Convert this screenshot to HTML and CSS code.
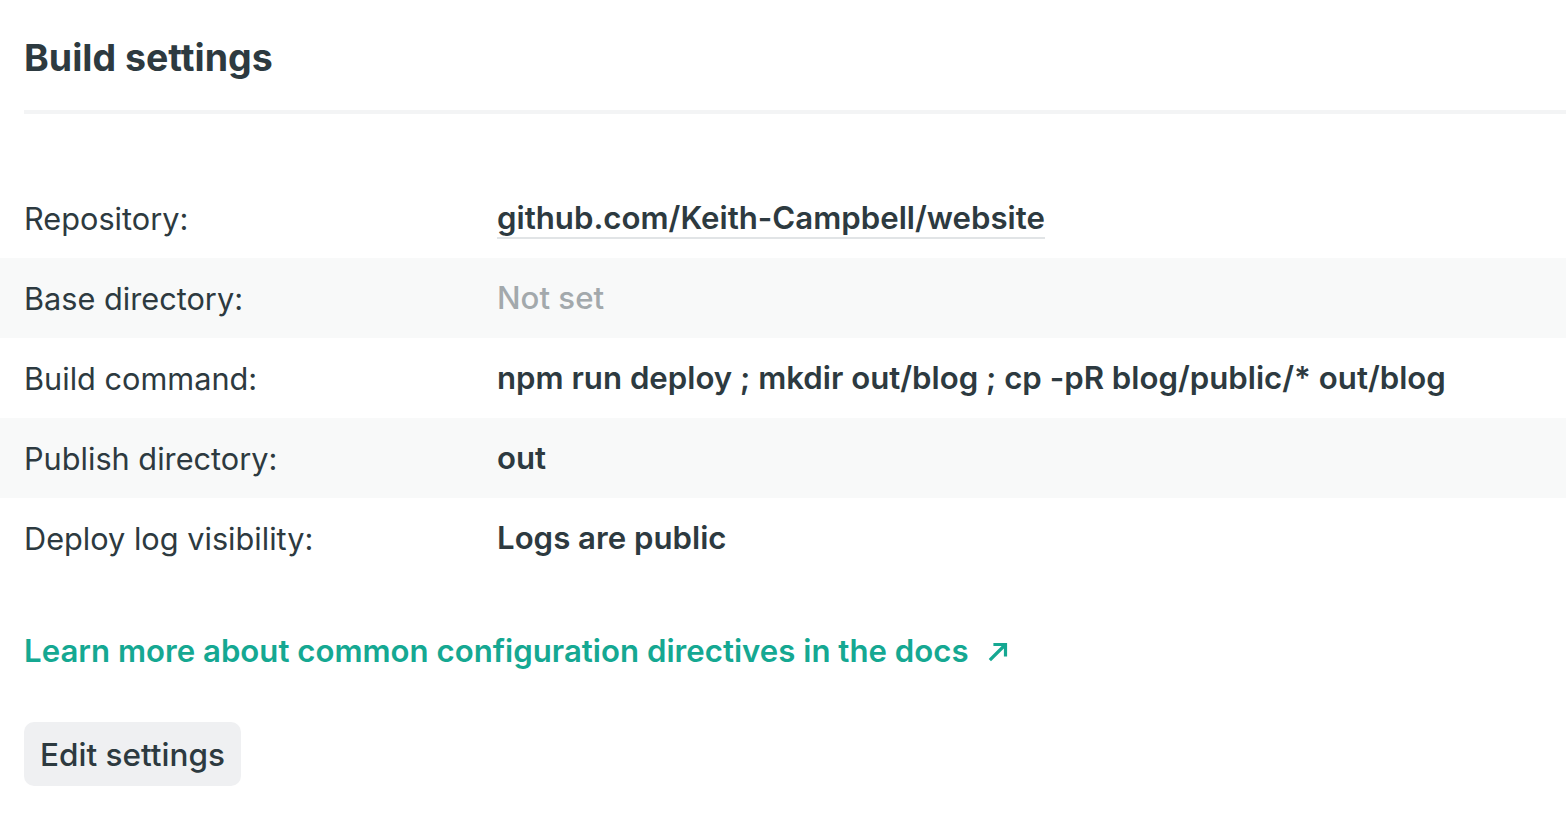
FILE: index.html
```html
<!DOCTYPE html>
<html>
<head>
<meta charset="utf-8">
<link rel="stylesheet" href="styles.css">
</head>
<body>
<section class="card">
  <h2 class="title">Build settings</h2>
  <dl class="settings">
    <div class="row"><dt>Repository:</dt><dd><a class="repo" href="#">github.com/Keith-Campbell/website</a></dd></div>
    <div class="row alt"><dt>Base directory:</dt><dd class="muted">Not set</dd></div>
    <div class="row"><dt>Build command:</dt><dd>npm run deploy ; mkdir out/blog ; cp -pR blog/public/* out/blog</dd></div>
    <div class="row alt"><dt>Publish directory:</dt><dd>out</dd></div>
    <div class="row"><dt>Deploy log visibility:</dt><dd>Logs are public</dd></div>
  </dl>
  <p class="docs"><a href="#">Learn more about common configuration directives in the docs<svg class="ext" width="24" height="24" viewBox="0 0 24 24"><path d="M4 20 L17 7 M8 5.5 H18.5 V16" fill="none" stroke="currentColor" stroke-width="3.2" stroke-linecap="square"/></svg></a></p>
  <button class="btn">Edit settings</button>
</section>
</body>
</html>
```
FILE: styles.css
```css
html, body { margin: 0; padding: 0; background: #fff; }
body { font-family: Inter, "Noto Sans", sans-serif; color: #2d3a40; }
.card { padding: 0 0 40px 0; }
.title { margin: 0 0 0 24px; font-size: 37.5px; font-weight: 700; line-height: 44px; padding-top: 36px; padding-bottom: 30px; border-bottom: 4px solid #f3f4f5; }
.settings { margin: 64px 0 0 0; }
.row { display: flex; align-items: center; height: 80px; padding-left: 24px; }
.row.alt { background: #f8f9f9; }
dt { width: 473px; font-size: 30.7px; font-weight: 400; }
dd { margin: 0; font-size: 31.2px; font-weight: 600; }
dd.muted { color: #a3a9ac; font-weight: 500; }
.repo { color: #2d3a40; text-decoration: none; border-bottom: 2px solid #e1e4e6; }
.docs { margin: 53px 0 0 24px; font-size: 31.2px; line-height: 40px; font-weight: 600; }
.docs a { color: #15a892; text-decoration: none; display: inline-flex; align-items: center; }
.ext { margin-left: 18px; }
.btn { display: block; margin: 51px 0 0 24px; font-family: inherit; font-size: 31.5px; font-weight: 500; color: #2d3a40; background: #eff0f2; border: 0; border-radius: 10px; height: 64px; padding: 0 16px; }
```
